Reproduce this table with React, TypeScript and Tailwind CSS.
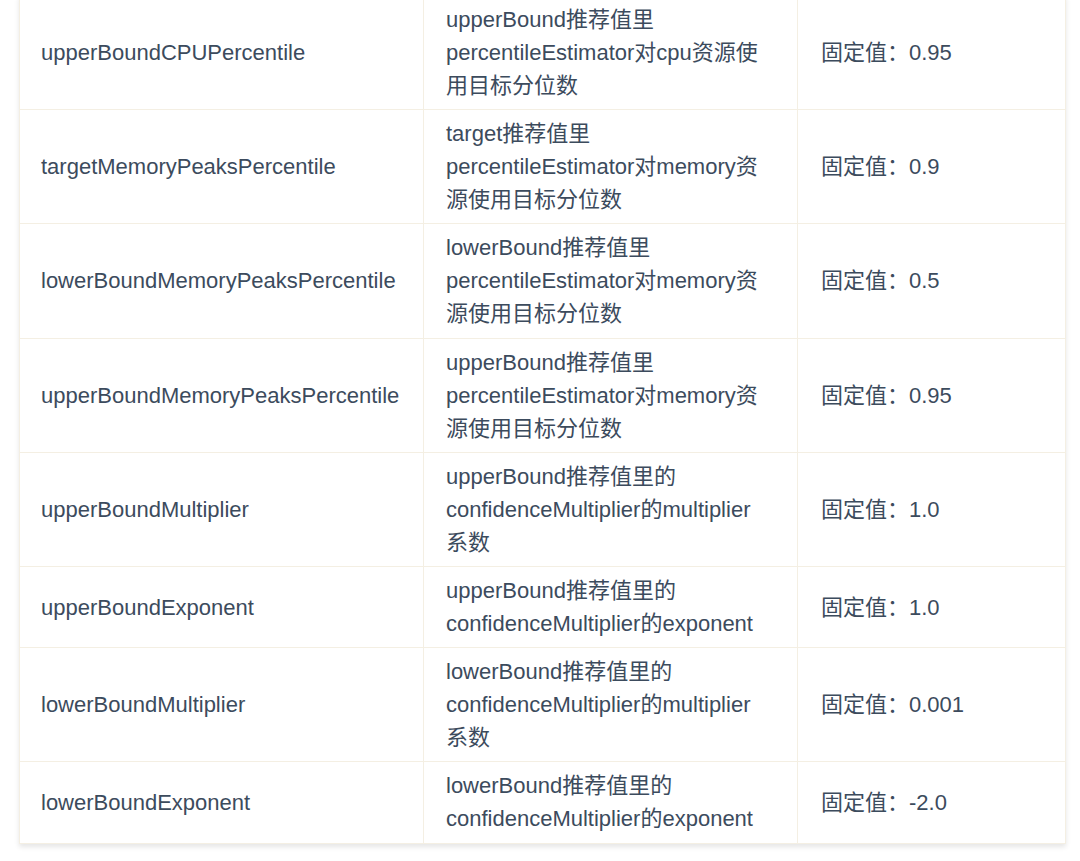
const rows = [
  {
    name: "upperBoundCPUPercentile",
    desc: ["upperBound推荐值里", "percentileEstimator对cpu资源使", "用目标分位数"],
    value: "固定值：0.95",
  },
  {
    name: "targetMemoryPeaksPercentile",
    desc: ["target推荐值里", "percentileEstimator对memory资", "源使用目标分位数"],
    value: "固定值：0.9",
  },
  {
    name: "lowerBoundMemoryPeaksPercentile",
    desc: ["lowerBound推荐值里", "percentileEstimator对memory资", "源使用目标分位数"],
    value: "固定值：0.5",
  },
  {
    name: "upperBoundMemoryPeaksPercentile",
    desc: ["upperBound推荐值里", "percentileEstimator对memory资", "源使用目标分位数"],
    value: "固定值：0.95",
  },
  {
    name: "upperBoundMultiplier",
    desc: ["upperBound推荐值里的", "confidenceMultiplier的multiplier", "系数"],
    value: "固定值：1.0",
  },
  {
    name: "upperBoundExponent",
    desc: ["upperBound推荐值里的", "confidenceMultiplier的exponent"],
    value: "固定值：1.0",
  },
  {
    name: "lowerBoundMultiplier",
    desc: ["lowerBound推荐值里的", "confidenceMultiplier的multiplier", "系数"],
    value: "固定值：0.001",
  },
  {
    name: "lowerBoundExponent",
    desc: ["lowerBound推荐值里的", "confidenceMultiplier的exponent"],
    value: "固定值：-2.0",
  },
];

export default function App() {
  return (
    <div className="h-[861px] w-[1080px] overflow-hidden bg-white font-['Liberation_Sans','Noto_Sans_CJK_SC',sans-serif] text-[22px] leading-[33px] text-[#3c4b5d]">
      <table className="-mt-[5px] ml-[19px] w-[1046px] table-fixed border-collapse shadow-[0_3px_5px_rgba(0,0,0,0.1)]">
        <colgroup>
          <col className="w-[404px]" />
          <col className="w-[374px]" />
          <col className="w-[268px]" />
        </colgroup>
        <tbody>
          {rows.map((row) => (
            <tr key={row.name}>
              <td className="border border-[#f4efe3] px-[21px] py-[7.1px] align-middle whitespace-nowrap">
                {row.name}
              </td>
              <td className="border border-[#f4efe3] px-[22px] py-[7.1px] align-middle">
                {row.desc.map((line) => (
                  <div key={line} className="whitespace-nowrap">
                    {line}
                  </div>
                ))}
              </td>
              <td className="border border-[#f4efe3] px-[23px] py-[7.1px] align-middle whitespace-nowrap">
                {row.value}
              </td>
            </tr>
          ))}
        </tbody>
      </table>
    </div>
  );
}
